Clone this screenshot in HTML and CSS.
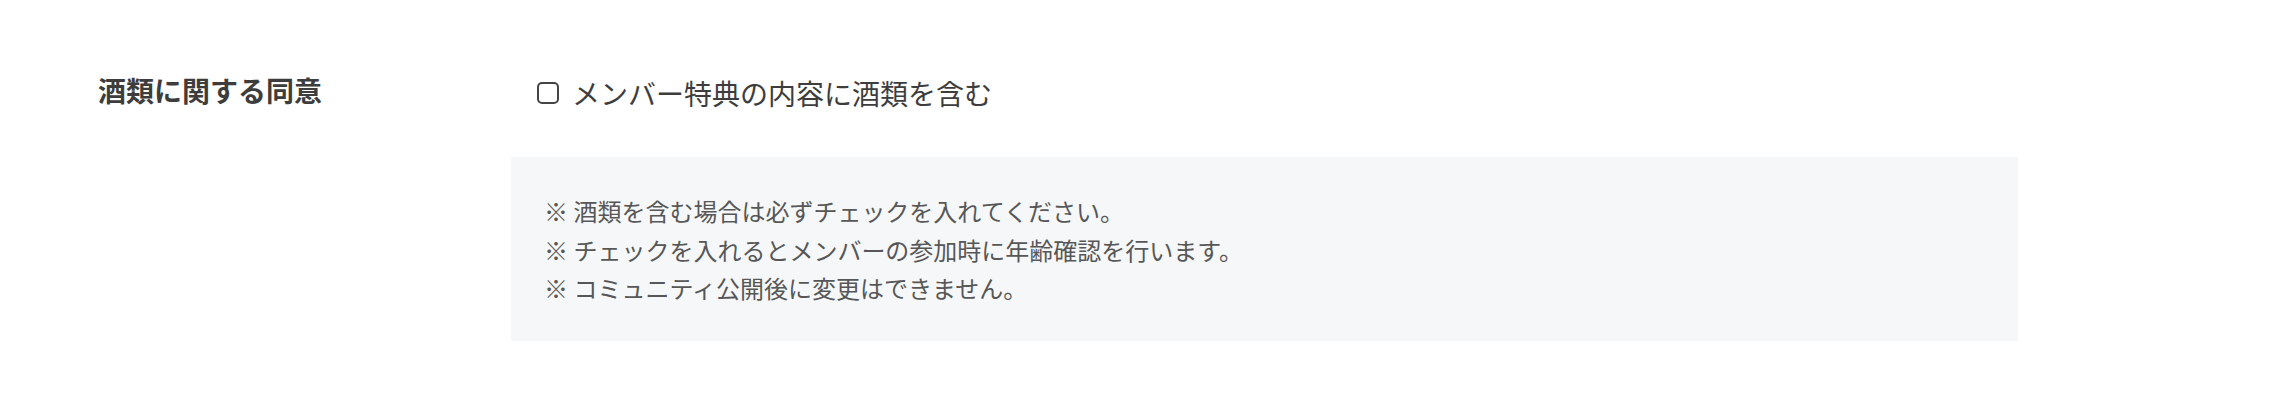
FILE: index.html
```html
<!DOCTYPE html>
<html lang="ja">
<head>
    <meta charset="UTF-8">
    <meta name="viewport" content="width=device-width, initial-scale=1.0">
    <title>酒類に関する同意</title>
    <link rel="stylesheet" href="styles.css">
</head>
<body>
    <!-- Alcohol consent row -->
    <div class="form-row">
        <div class="form-label">酒類に関する同意</div>
        <div class="form-body">
            <label class="check">
                <input type="checkbox" class="check-input">
                <span class="check-box"></span>
                <span class="check-text">メンバー特典の内容に酒類を含む</span>
            </label>
            <div class="note-box">
                <p class="note">※ 酒類を含む場合は必ずチェックを入れてください。</p>
                <p class="note">※ チェックを入れるとメンバーの参加時に年齢確認を行います。</p>
                <p class="note">※ コミュニティ公開後に変更はできません。</p>
            </div>
        </div>
    </div>
</body>
</html>
```

FILE: styles.css
```css
body {
    margin: 0;
    background-color: #fff;
    font-family: "Noto Sans CJK JP", "Noto Sans", sans-serif;
    color: #333;
}
.form-row {
    display: flex;
    padding: 69px 0 0 98px;
}
.form-label {
    width: 413px;
    flex-shrink: 0;
    font-size: 28px;
    line-height: 42px;
    font-weight: bold;
    color: #3d3d3d;
}
.form-body {
    width: 1507px;
    padding-top: 3px;
}
.check {
    display: flex;
    align-items: center;
    height: 42px;
    padding-left: 26px;
    margin-bottom: 43px;
    cursor: pointer;
}
.check-input {
    display: none;
}
.check-box {
    width: 18px;
    height: 18px;
    border: 2px solid #444;
    border-radius: 5px;
    margin-right: 13px;
}
.check-text {
    font-size: 28px;
    color: #3d3d3d;
}
.note-box {
    background-color: #f6f7f9;
    padding: 35px 32px 33px 33px;
}
.note {
    margin: 0;
    font-size: 24px;
    line-height: 38.6px;
    color: #575757;
}
```
